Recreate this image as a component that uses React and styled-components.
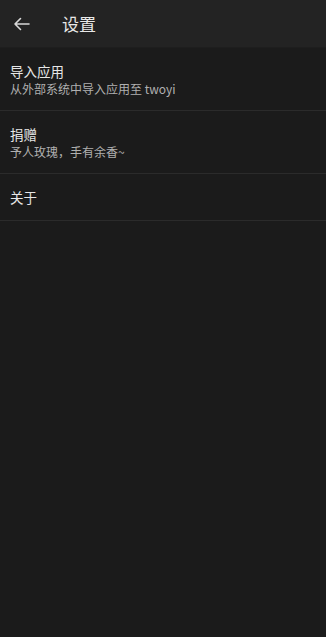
import styled, { createGlobalStyle } from "styled-components";

const GlobalStyle = createGlobalStyle`
    html, body {
        margin: 0;
        padding: 0;
        background-color: #1b1b1b;
    }
    body {
        font-family: "Noto Sans CJK SC", "Noto Sans", sans-serif;
    }
`;

const items = [
    { title: "导入应用", subtitle: "从外部系统中导入应用至 twoyi" },
    { title: "捐赠", subtitle: "予人玫瑰，手有余香~" },
    { title: "关于" },
];

export default function App() {
    return (
        <Page>
            <GlobalStyle />
            <Toolbar>
                <BackButton aria-label="back">
                    <svg width="17" height="14" viewBox="0 0 17 14" fill="none">
                        <path d="M16 7H2M7.5 1.5L2 7l5.5 5.5" stroke="#d8d8d8" strokeWidth="1.6" strokeLinecap="round" strokeLinejoin="round" />
                    </svg>
                </BackButton>
                <Title>设置</Title>
            </Toolbar>
            <List>
                {items.map((item) => (
                    <Row key={item.title}>
                        <RowTitle>{item.title}</RowTitle>
                        {item.subtitle && <RowSubtitle>{item.subtitle}</RowSubtitle>}
                    </Row>
                ))}
            </List>
        </Page>
    );
}

const Page = styled.div`
    width: 326px;
    min-height: 637px;
    background-color: #1b1b1b;
`;

const Toolbar = styled.div`
    height: 48px;
    background-color: #232323;
    display: flex;
    align-items: center;
    box-sizing: border-box;
    padding-left: 13px;
    border-bottom: 1px solid #1e1e1e;
`;

const BackButton = styled.div`
    width: 17px;
    height: 14px;
    display: flex;
    align-items: center;
`;

const Title = styled.h1`
    margin: 0 0 0 32px;
    font-size: 17px;
    font-weight: 400;
    color: #e8e8e8;
    line-height: 20px;
`;

const List = styled.div`
    display: flex;
    flex-direction: column;
`;

const Row = styled.div`
    display: flex;
    flex-direction: column;
    padding: 14px 10px 13px;
    border-bottom: 1px solid #2b2b2b;
`;

const RowTitle = styled.div`
    font-size: 13.5px;
    line-height: 19px;
    color: #e6e6e6;
`;

const RowSubtitle = styled.div`
    font-size: 12px;
    line-height: 16px;
    color: #b0b0b0;
`;
